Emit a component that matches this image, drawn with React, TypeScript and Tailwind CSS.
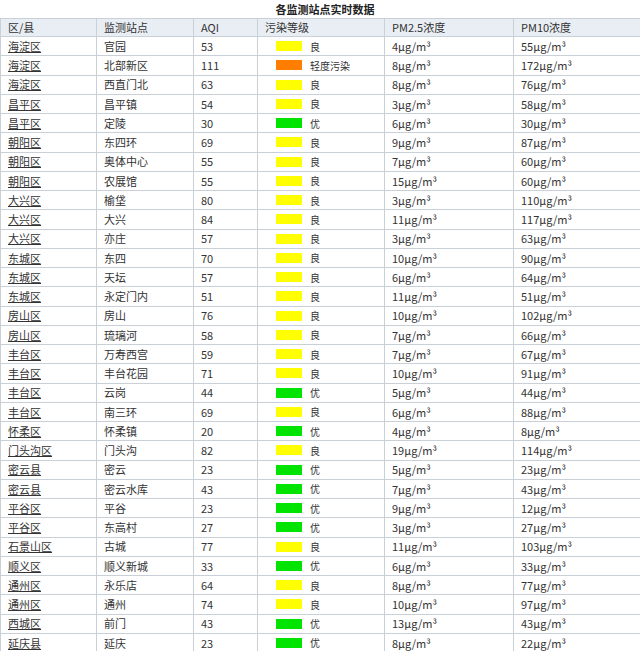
const rows: [string,string,number,string,number,number][] = [
["海淀区","官园",53,"良",4,55],
["海淀区","北部新区",111,"轻度污染",8,172],
["海淀区","西直门北",63,"良",8,76],
["昌平区","昌平镇",54,"良",3,58],
["昌平区","定陵",30,"优",6,30],
["朝阳区","东四环",69,"良",9,87],
["朝阳区","奥体中心",55,"良",7,60],
["朝阳区","农展馆",55,"良",15,60],
["大兴区","榆垡",80,"良",3,110],
["大兴区","大兴",84,"良",11,117],
["大兴区","亦庄",57,"良",3,63],
["东城区","东四",70,"良",10,90],
["东城区","天坛",57,"良",6,64],
["东城区","永定门内",51,"良",11,51],
["房山区","房山",76,"良",10,102],
["房山区","琉璃河",58,"良",7,66],
["丰台区","万寿西宫",59,"良",7,67],
["丰台区","丰台花园",71,"良",10,91],
["丰台区","云岗",44,"优",5,44],
["丰台区","南三环",69,"良",6,88],
["怀柔区","怀柔镇",20,"优",4,8],
["门头沟区","门头沟",82,"良",19,114],
["密云县","密云",23,"优",5,23],
["密云县","密云水库",43,"优",7,43],
["平谷区","平谷",23,"优",9,12],
["平谷区","东高村",27,"优",3,27],
["石景山区","古城",77,"良",11,103],
["顺义区","顺义新城",33,"优",6,33],
["通州区","永乐店",64,"良",8,77],
["通州区","通州",74,"良",10,97],
["西城区","前门",43,"优",13,43],
["延庆县","延庆",23,"优",8,22],
];
const col = (g:string)=> g==="良"?"bg-[#ffff00]":g==="优"?"bg-[#00e400]":"bg-[#ff7e00]";
export default function App(){
  const cell="border-r border-b border-[#c9d0d8] pl-[7px] flex items-center";
  return <div className="w-[640px] h-[651px] overflow-hidden bg-white text-[11px] text-[#333]" style={{fontFamily:'"Noto Sans CJK SC", sans-serif'}}>
    <div className="h-[18px] flex items-center justify-center font-bold text-[#222] text-[11px] pl-[10px]">各监测站点实时数据</div>
    <div className="grid grid-cols-[96px_97px_64px_127px_129px_127px] border-t border-l border-[#c9d0d8]">
      {["区/县","监测站点","AQI","污染等级","PM2.5浓度","PM10浓度"].map(h=><div key={h} className={cell+" h-[18px] bg-[#e9eef4]"}>{h}</div>)}
      {rows.map((r,i)=>[
        <div key={i+"a"} className={cell+" h-[19.25px]"}><span className="underline">{r[0]}</span></div>,
        <div key={i+"b"} className={cell+" h-[19.25px]"}>{r[1]}</div>,
        <div key={i+"c"} className={cell+" h-[19.25px]"}>{r[2]}</div>,
        <div key={i+"d"} className={cell+" h-[19.25px] pl-[18px] gap-[8px]"}><span className={"w-[26px] h-[10px] "+col(r[3])}></span><span className="text-[10px]">{r[3]}</span></div>,
        <div key={i+"e"} className={cell+" h-[19.25px]"}>{r[4]}μg/m³</div>,
        <div key={i+"f"} className={cell+" h-[19.25px]"}>{r[5]}μg/m³</div>,
      ])}
    </div>
  </div>;
}
